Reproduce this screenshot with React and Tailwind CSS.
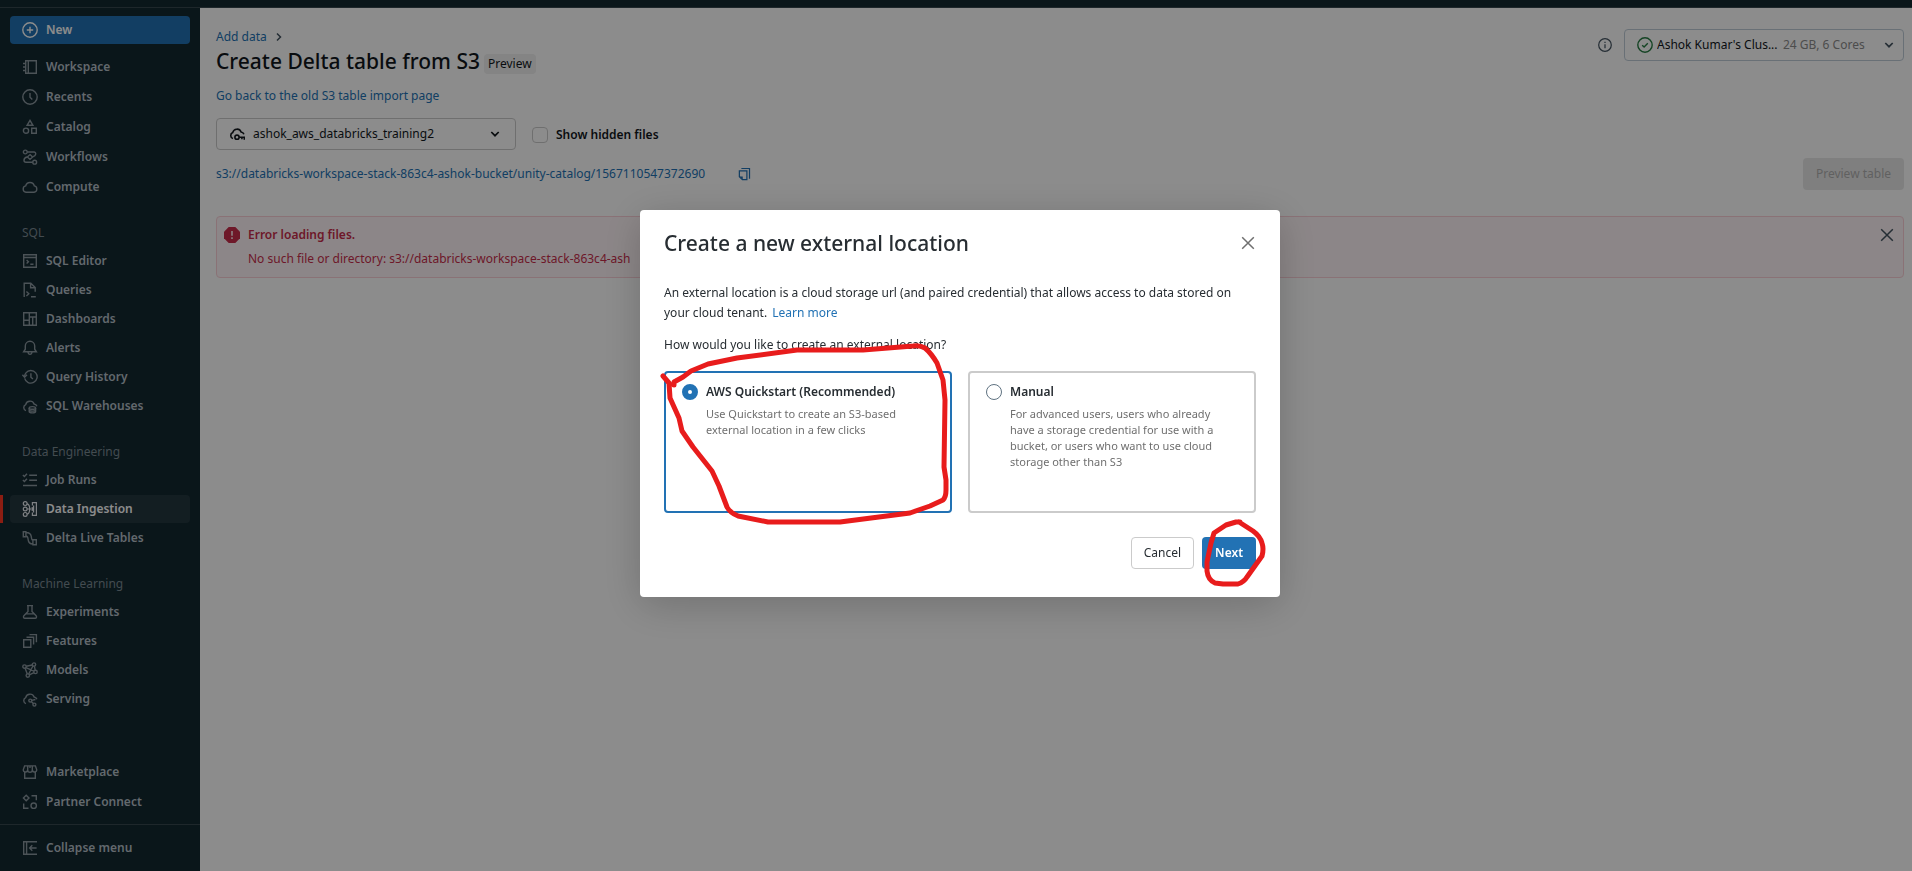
import React, { useState } from "react";

function Icon({ children, className = "h-4 w-4" }) {
  return (
    <svg
      viewBox="0 0 16 16"
      fill="none"
      stroke="currentColor"
      strokeWidth="1.4"
      className={`shrink-0 ${className}`}
      aria-hidden="true"
    >
      {children}
    </svg>
  );
}

const CLOUD_OPEN = "M4 12.6A3.2 3.2 0 0 1 3.7 6.6a4.4 4.4 0 0 1 8.4-.6c1.4.2 2.4 1 2.8 2.3";

const icons = {
  plus: (
    <>
      <circle cx="8" cy="8" r="7.2" />
      <path d="M8 4.8v6.4M4.8 8h6.4" />
    </>
  ),
  workspace: (
    <path d="M3.7 1.7h10.6v12.6H3.7zM6.3 1.7v12.6M1 4.5h2.7M1 8h2.7M1 11.5h2.7" />
  ),
  recents: (
    <>
      <circle cx="8" cy="8" r="7.2" />
      <path d="M8 4v4.3l2.3 2.2" />
    </>
  ),
  catalog: (
    <>
      <path d="M8 1.4l2.9 4.9H5.1zM9.7 9.3h4.6v4.9H9.7z" />
      <circle cx="4" cy="11.7" r="2.6" />
    </>
  ),
  workflows: (
    <>
      <circle cx="3.3" cy="3" r="1.9" />
      <circle cx="12.7" cy="13.2" r="1.9" />
      <path d="M5.3 3h6.6a1.8 1.8 0 0 1 1.8 2.2c-.3 1.5-1.6 2.2-2.7 2.4M10.7 13.2H4a2 2 0 0 1-2-2c0-1.8 1.4-2.8 3-3.2" />
      <path d="M8 5.6l2.6 2.4L8 10.4 5.4 8z" />
    </>
  ),
  compute: (
    <path d="M4 13.2A3.2 3.2 0 0 1 3.7 6.9a4.4 4.4 0 0 1 8.6 0A3.2 3.2 0 0 1 12 13.2z" />
  ),
  sqlEditor: (
    <path d="M1.7 1.7h12.6v12.6H1.7zM1.7 4.5h12.6M4.6 7l1.8 1.7-1.8 1.7M8.3 11.3h3.2" />
  ),
  queries: (
    <path d="M2.2 15V1.2h6.6l4.4 4.3v4.3M8.6 1.4v4.3h4.4M4.4 9.6l2.4 2.2-2.4 2.2M9 14.8h4.8" />
  ),
  dashboards: (
    <path d="M1.7 1.7h12.6v12.6H1.7zM7.3 1.7v12.6M7.3 6h7M10.7 6v8.3M1.7 9.3h5.6" />
  ),
  alerts: (
    <>
      <path d="M1.6 11.8h12.8l-1.7-2.6V6a4.7 4.7 0 0 0-9.4 0v3.2z" />
      <path d="M6 12c.2 1.7.9 2.4 2 2.4s1.8-.7 2-2.4" />
    </>
  ),
  history: (
    <>
      <path d="M2.7 9.3A6.300 6.300 0 1 0 3.900 3.900C2.900 4.900 2.700 6 2.600 7.500" />
      <path d="M.4 5.800l2.200 2.400L5 5.800" />
      <path d="M8.900 4.200v4l2 1.900" />
    </>
  ),
  warehouse: (
    <>
      <path d={CLOUD_OPEN} />
      <ellipse cx="10.4" cy="9.9" rx="3.2" ry="1.3" />
      <path d="M7.2 9.9v3.7c0 .7 1.4 1.3 3.2 1.3s3.2-.6 3.2-1.300V9.900M7.200 11.800c0 .7 1.400 1.300 3.200 1.300s3.200-.6 3.200-1.300" />
    </>
  ),
  jobRuns: (
    <path d="M.9 3l1.5 1.5L5 1.700M.9 8l1.500 1.500L5 6.700M7.200 3.300h7.800M7.200 8.300h7.800M1 13.500h14" />
  ),
  ingestion: (
    <g strokeWidth="1.2">
      <circle cx="3.2" cy="2.6" r="1.9" />
      <circle cx="3.2" cy="8" r="1.9" />
      <circle cx="3.2" cy="13.4" r="1.9" />
      <path d="M5.1 8h6M5 2.800c2 .4 2.700 2.400 2.700 5.200S7 12.800 5 13.200M10.400 4.400V1.700h4v12.600h-4v-2.700M11.600 4.600v6.800M9.800 6.200L11.500 8 9.800 9.800" />
    </g>
  ),
  delta: (
    <path d="M1.300 1.700v5h2.600V5.900c2 0 2 1.300 2.200 3.500.3 3 1.500 4.600 4.800 4.600v.7h3.400V9.800h-3.400v.7C9.500 10.300 9.600 9 9.300 6.600 8.900 3.500 7.400 2.500 3.900 2.500v-.8zM3.900 2v4.400M10.900 10v4.400" />
  ),
  experiments: (
    <path d="M5 1.600h6M6 1.600v5.800L1.900 11.700c-.9 1.200-.3 2.500 1 2.500h10.200c1.300 0 1.900-1.300 1-2.500L10 7.400V1.600M4.300 9.900h7.400" />
  ),
  features: (
    <path d="M1.700 6.700h7.100v7.600H1.700zM4.500 4.200h7.100v7.400M7.500 1.600h6.900v7.600" />
  ),
  models: (
    <>
      <circle cx="2.5" cy="4.6" r="1.7" />
      <circle cx="12" cy="2.6" r="1.7" />
      <circle cx="13.5" cy="9.9" r="1.7" />
      <circle cx="5.8" cy="13.6" r="1.7" />
      <path d="M4.200 4.200l6.100-1.200M12.400 4.300l.8 3.900M3.100 6.200l2.200 5.800M7.300 12.800l4.700-2.100M3.900 5.600l8 3.500M10.900 4l-4.200 8" />
    </>
  ),
  serving: (
    <>
      <path d={CLOUD_OPEN} />
      <circle cx="8.3" cy="9.6" r="1.5" />
      <circle cx="12.4" cy="13.6" r="1.5" />
      <path d="M9.500 10.800l1.800 1.700M9.700 9.400l3.700-.9" />
    </>
  ),
  marketplace: (
    <path d="M2.600 1.900h10.800l1.300 3.700a2.200 2.200 0 0 1-4.400.3 2.300 2.300 0 0 1-4.600 0 2.200 2.200 0 0 1-4.400-.3zM5.700 5.900V2M10.300 5.900V2M8 2v2M2.700 8v6.200h10.600V8" />
  ),
  partner: (
    <>
      <path d="M4.200 1.200L7 4 4.200 6.800 1.400 4zM9.500 1.700h4.800v4.600M1.700 9.500v4.800h4.800" />
      <circle cx="11.7" cy="11.7" r="2.7" />
    </>
  ),
  collapse: (
    <path d="M15 1.700H1.700v12.600H15M4.600 1.700v12.600M14.600 8H7.600M10.300 5.300L7.600 8l2.700 2.700" />
  ),
  cloudKey: (
    <g strokeWidth="1.6">
      <path d={CLOUD_OPEN} />
      <circle cx="8" cy="11.2" r="2.1" />
      <path d="M10.100 11.200h5.200v2.600M12.900 11.200v2" />
    </g>
  ),
  chevronDown: <path d="M4.300 6l3.700 3.700L11.700 6" strokeWidth="1.7" />,
  chevronRight: <path d="M6 4.500L9.500 8 6 11.500" strokeWidth="1.5" />,
  close: <path d="M2.200 2.200l11.600 11.600M13.800 2.200L2.200 13.800" strokeWidth="1.5" />,
  info: (
    <>
      <circle cx="8" cy="8" r="7.2" />
      <path d="M8 7v4.600M8 4.200v1.600" />
    </>
  ),
  check: (
    <>
      <circle cx="8" cy="8" r="7.2" />
      <path d="M5.200 8.200l1.900 1.900 3.700-3.900" />
    </>
  ),
  copy: (
    <>
      <path d="M5 1.700h9.300v11.600" />
      <path d="M2.700 4.500h8.600v10H6.200l-3.500-3.300z" />
      <path d="M3 10.800h3.600v3.500z" fill="currentColor" stroke="none" />
    </>
  ),
};

const mainNav = [
  ["Workspace", "workspace"],
  ["Recents", "recents"],
  ["Catalog", "catalog"],
  ["Workflows", "workflows"],
  ["Compute", "compute"],
];

const sections = [
  {
    title: "SQL",
    items: [
      ["SQL Editor", "sqlEditor"],
      ["Queries", "queries"],
      ["Dashboards", "dashboards"],
      ["Alerts", "alerts"],
      ["Query History", "history"],
      ["SQL Warehouses", "warehouse"],
    ],
  },
  {
    title: "Data Engineering",
    items: [
      ["Job Runs", "jobRuns"],
      ["Data Ingestion", "ingestion"],
      ["Delta Live Tables", "delta"],
    ],
  },
  {
    title: "Machine Learning",
    items: [
      ["Experiments", "experiments"],
      ["Features", "features"],
      ["Models", "models"],
      ["Serving", "serving"],
    ],
  },
];

function NavItem({ label, icon, active = false }) {
  return (
    <li className={`border-l-3 pr-2.5 pl-[7px] ${active ? "border-[#ff3621]" : "border-transparent"}`}>
      <a
        href="#"
        aria-current={active ? "page" : undefined}
        className={`flex h-7 items-center gap-2 rounded px-3 font-semibold ${
          active ? "bg-[#24373f] text-white" : "text-[#b4bfc7]"
        }`}
      >
        <Icon className={active ? "h-4 w-4 text-[#e8ecf0]" : "h-4 w-4 text-[#8a979f]"}>{icons[icon]}</Icon>
        {label}
      </a>
    </li>
  );
}

function Sidebar() {
  return (
    <nav aria-label="Main" className="flex w-[200px] shrink-0 flex-col bg-[#132830] pt-2">
      <button type="button" className="mx-2.5 flex h-7 items-center gap-2 rounded bg-[#2272b4] px-3 font-semibold text-white">
        <Icon>{icons.plus}</Icon>
        New
      </button>
      <ul className="mt-[9px] flex flex-col gap-0.5">
        {mainNav.map(([label, icon]) => (
          <NavItem key={label} label={label} icon={icon} />
        ))}
      </ul>
      {sections.map((section) => (
        <section key={section.title} className="mt-[18px]">
          <h2 className="flex h-7 items-center px-[22px] text-[#7b8a93]">{section.title}</h2>
          <ul className="flex flex-col gap-px">
            {section.items.map(([label, icon]) => (
              <NavItem key={label} label={label} icon={icon} active={label === "Data Ingestion"} />
            ))}
          </ul>
        </section>
      ))}
      <div className="mt-auto pt-6">
        <ul className="flex flex-col gap-0.5 pb-2">
          <NavItem label="Marketplace" icon="marketplace" />
          <NavItem label="Partner Connect" icon="partner" />
        </ul>
        <ul className="border-t border-[#38484f] py-[9px]">
          <NavItem label="Collapse menu" icon="collapse" />
        </ul>
      </div>
    </nav>
  );
}

function ImportPage() {
  return (
    <main className="min-w-0 flex-1 bg-white pt-[21px] pr-2 pl-4">
      <div className="flex items-start justify-between">
        <div>
          <div className="flex h-4 items-center gap-1">
            <a href="#" className="text-[#2272b4]">Add data</a>
            <Icon className="h-4 w-4 text-[#445461]">{icons.chevronRight}</Icon>
          </div>
          <div className="flex items-center gap-1">
            <h1 className="text-[21px]/8 font-medium text-[#11171c]">Create Delta table from S3</h1>
            <span className="mt-1.5 rounded bg-[#f0f0f0] px-1 text-[#11171c]">Preview</span>
          </div>
        </div>
        <div className="flex items-center gap-3">
          <Icon className="h-3.5 w-3.5 text-[#445461]">{icons.info}</Icon>
          <label className="flex h-8 w-[280px] items-center rounded border border-[#c0cdd8] pr-1.5 pl-3">
            <Icon className="h-4 w-4 text-[#277c43]">{icons.check}</Icon>
            <select aria-label="Cluster" className="w-[130px] appearance-none pl-1 text-[#11171c] outline-none">
              <option>Ashok Kumar's Clus...</option>
            </select>
            <span className="flex-1 whitespace-nowrap text-[#8c8c8c]">24 GB, 6 Cores</span>
            <Icon className="h-4 w-4 text-[#445461]">{icons.chevronDown}</Icon>
          </label>
        </div>
      </div>

      <a href="#" className="mt-[9px] block w-fit text-[#2272b4]">
        Go back to the old S3 table import page
      </a>

      <div className="mt-3 flex items-center gap-4">
        <label className="flex h-8 w-[300px] items-center gap-2 rounded border border-[#cbcbcb] px-3">
          <Icon className="h-4 w-4 text-[#11171c]">{icons.cloudKey}</Icon>
          <select aria-label="External location" className="flex-1 appearance-none text-[#11171c] outline-none">
            <option>ashok_aws_databricks_training2</option>
          </select>
          <Icon className="h-4 w-4 text-[#11171c]">{icons.chevronDown}</Icon>
        </label>
        <label className="flex items-center gap-2 pt-0.5 font-semibold text-[#11171c]">
          <input type="checkbox" className="h-4 w-4 appearance-none rounded border border-[#cbcbcb]" />
          Show hidden files
        </label>
      </div>

      <div className="mt-2 flex items-center gap-8">
        <a href="#" className="text-[#2272b4]">
          s3://databricks-workspace-stack-863c4-ashok-bucket/unity-catalog/1567110547372690
        </a>
        <button type="button" aria-label="Copy path" className="text-[#2272b4]">
          <Icon className="h-3.5 w-3.5">{icons.copy}</Icon>
        </button>
        <button type="button" disabled className="ml-auto h-8 rounded bg-[#e8e8e8] px-[13px] text-[#b0b0b0]">
          Preview table
        </button>
      </div>

      <div role="alert" className="mt-[26px] flex gap-2 rounded border border-[#fbd0d8] bg-[#fff5f7] py-2 pr-2 pl-[7px] text-[#c82d4c]">
        <svg viewBox="0 0 16 16" className="mt-0.5 h-4 w-4 shrink-0" aria-hidden="true">
          <path d="M4.700 0h6.600L16 4.700v6.600L11.300 16H4.700L0 11.300V4.700z" fill="currentColor" />
          <path d="M8 4v4.800M8 10.300v1.800" stroke="#fff5f7" strokeWidth="1.500" />
        </svg>
        <div className="min-w-0 flex-1">
          <p className="leading-5 font-semibold">Error loading files.</p>
          <p className="mt-1 leading-5">No such file or directory: s3://databricks-workspace-stack-863c4-ash</p>
        </div>
        <button type="button" aria-label="Dismiss" className="h-5 text-[#445461]">
          <Icon>{icons.close}</Icon>
        </button>
      </div>
    </main>
  );
}

function OptionCard({ title, text, checked, onChange }) {
  return (
    <label
      className={`flex h-[142px] flex-1 gap-2 rounded border-2 px-4 py-[11px] ${
        checked ? "border-[#2272b4]" : "border-[#cbcbcb]"
      }`}
    >
      <input
        type="radio"
        name="location-type"
        checked={checked}
        onChange={onChange}
        className="h-4 w-4 shrink-0 appearance-none rounded-full border border-[#5f7281] checked:border-[6px] checked:border-[#2272b4]"
      />
      <span className="min-w-0 flex-1 pr-3">
        <span className="block leading-4 font-semibold text-[#272d32]">{title}</span>
        <span className="mt-1.5 block text-[11px]/4 text-[#6f6f6f]">{text}</span>
      </span>
    </label>
  );
}

function Annotations() {
  return (
    <svg
      viewBox="0 0 640 387"
      className="pointer-events-none absolute top-0 left-0 h-[387px] w-[640px]"
      fill="none"
      stroke="#e81c1c"
      strokeWidth="5"
      strokeLinecap="round"
      strokeLinejoin="round"
      aria-hidden="true"
    >
      <path d="M23 166L29 173L30 188L39 208L42 221L53 237L72 261L79 276L87 297Q90 303 98 306L128 312H200L270 303L290 296L303 290Q306 287 306 280L306 270L304 257L305 190L303 170L297 153Q291 143 285 138Q280 135 273 136L223 140H157L97 148L68 154L51 161L43 167L34 172V175" />
      <path d="M600 312H596L586 315L574 323L571 333L567 352V361Q568 370 575 373L583 374H598Q604 372 607 367L622 346Q624 339 622 333Q620 326 613 321L599 312" />
    </svg>
  );
}

function LocationDialog() {
  const [choice, setChoice] = useState("quickstart");
  return (
    <div className="fixed inset-0 flex items-start justify-center overflow-auto bg-black/45 pt-[210px] pl-2">
      <div
        role="dialog"
        aria-modal="true"
        aria-labelledby="dialog-title"
        className="relative w-[640px] rounded bg-white px-6 pt-[17px] pb-7 shadow-[0_8px_40px_rgba(0,0,0,0.2)]"
      >
        <div className="flex items-center justify-between">
          <h2 id="dialog-title" className="text-[21px]/8 font-medium text-[#272d32]">
            Create a new external location
          </h2>
          <button type="button" aria-label="Close" className="text-[#6f6f6f]">
            <Icon>{icons.close}</Icon>
          </button>
        </div>
        <p className="mt-6 leading-5 text-[#272d32]">
          An external location is a cloud storage url (and paired credential) that allows access to data stored on
          your cloud tenant.{" "}
          <a href="#" className="ml-0.5 text-[#2272b4]">
            Learn more
          </a>
        </p>
        <fieldset className="mt-3">
          <legend className="leading-5 text-[#272d32]">How would you like to create an external location?</legend>
          <div className="mt-4 flex gap-4">
            <OptionCard
              title="AWS Quickstart (Recommended)"
              text="Use Quickstart to create an S3-based external location in a few clicks"
              checked={choice === "quickstart"}
              onChange={() => setChoice("quickstart")}
            />
            <OptionCard
              title="Manual"
              text="For advanced users, users who already have a storage credential for use with a bucket, or users who want to use cloud storage other than S3"
              checked={choice === "manual"}
              onChange={() => setChoice("manual")}
            />
          </div>
        </fieldset>
        <div className="mt-6 flex justify-end gap-2">
          <button type="button" className="h-8 rounded border border-[#cbcbcb] px-3 text-[#272d32]">
            Cancel
          </button>
          <button type="button" className="h-8 rounded bg-[#2272b4] px-[13px] font-semibold text-white">
            Next
          </button>
        </div>
        <Annotations />
      </div>
    </div>
  );
}

export default function App() {
  return (
    <div className="flex min-h-screen flex-col bg-white font-['Noto_Sans',sans-serif] text-[12px]/5">
      <header className="h-2 shrink-0 border-b border-[#38484f] bg-[#132830]" />
      <div className="flex flex-1">
        <Sidebar />
        <ImportPage />
      </div>
      <LocationDialog />
    </div>
  );
}
